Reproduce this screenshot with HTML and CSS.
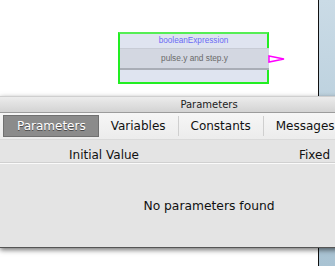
FILE: index.html
```html
<!DOCTYPE html>
<html lang="en">
<head>
    <meta charset="UTF-8">
    <title>Parameters</title>
    <link rel="stylesheet" href="styles.css">
</head>
<body>
    <div class="workspace">
        <div class="canvas">
            <div class="node">
                <div class="node-title">booleanExpression</div>
                <div class="node-expr">pulse.y and step.y</div>
                <svg class="port" width="18" height="8" viewBox="0 0 18 8">
                    <polygon points="1,1 16,4 1,7" fill="#ffffff" stroke="#ff00ff" stroke-width="1.5"/>
                </svg>
            </div>
        </div>
        <div class="side-strip"></div>
    </div>

    <div class="panel">
        <div class="panel-title">Parameters</div>
        <div class="tabs">
            <span class="tab active">Parameters</span>
            <span class="tab">Variables</span>
            <span class="tab divided">Constants</span>
            <span class="tab divided">Messages</span>
        </div>
        <div class="table-head">
            <span class="col-name"></span>
            <span class="col-value">Initial Value</span>
            <span class="col-fixed">Fixed</span>
        </div>
        <div class="empty">No parameters found</div>
    </div>
</body>
</html>
```

FILE: styles.css
```css
body {
    margin: 0;
    width: 335px;
    height: 266px;
    overflow: hidden;
    position: relative;
    font-family: "DejaVu Sans", Verdana, sans-serif;
    background: #ffffff;
}

/* Diagram canvas behind the panel */
.workspace {
    display: flex;
    height: 266px;
}

.canvas {
    position: relative;
    width: 318px;
    border-right: 1px solid #111111;
    background: #ffffff;
}

.side-strip {
    flex: 1;
    background: linear-gradient(#cadbe6, #a9c3d3);
}

.node {
    position: absolute;
    left: 118px;
    top: 32px;
    width: 147px;
    height: 48px;
    background: #dfe4f0;
    border: 2px solid #22ee22;
    border-top-color: #55ee55;
    font-family: "Liberation Sans", Arial, sans-serif;
}

.node-title {
    height: 13px;
    padding-top: 1px;
    text-align: center;
    font-size: 8.2px;
    line-height: 12px;
    color: #6b6bf5;
}

.node-expr {
    height: 19px;
    margin-right: -2px;
    background: #d3d7e1;
    border-top: 1px solid #c8ccd6;
    border-bottom: 2px solid #a9adb6;
    text-align: center;
    font-size: 8.3px;
    line-height: 19px;
    color: #6a6a6a;
}

.port {
    position: absolute;
    right: -19px;
    top: 21px;
}

/* Floating parameters panel */
.panel {
    position: absolute;
    left: 0;
    top: 96px;
    width: 418px;
    height: 151px;
    background: #e4e4e4;
    border-bottom: 1px solid #555555;
    box-shadow: 0 2px 5px rgba(0, 0, 0, 0.55);
}

.panel-title {
    height: 15px;
    border-top: 1px solid #cfcfcf;
    border-bottom: 1px solid #9c9c9c;
    background: linear-gradient(#ececec, #d3d3d3);
    text-align: center;
    font-size: 10px;
    line-height: 15px;
    color: #222222;
}

.tabs {
    display: flex;
    align-items: center;
    height: 26px;
    padding-left: 3px;
    background: linear-gradient(#f6f6f6, #ececec);
    border-bottom: 1px solid #dadada;
}

.tab {
    height: 20px;
    padding: 0 12px;
    font-size: 12px;
    line-height: 20px;
    color: #111111;
    white-space: nowrap;
}

.tab.active {
    padding: 0 12px 0 13px;
    background: #8b8b8b;
    border: 1px solid #707070;
    color: #ffffff;
    text-shadow: 0 1px 0 #4a4a4a;
}

.tab.divided {
    border-left: 1px solid #cfcfcf;
}

.table-head {
    display: grid;
    grid-template-columns: 69px 230px 1fr;
    height: 23px;
    border-bottom: 1px solid #fafafa;
    box-shadow: 0 -1px 0 #d0d0d0 inset;
    font-size: 12px;
    line-height: 30px;
    color: #111111;
}

.empty {
    padding-top: 35px;
    text-align: center;
    font-size: 12.3px;
    color: #111111;
}
```
